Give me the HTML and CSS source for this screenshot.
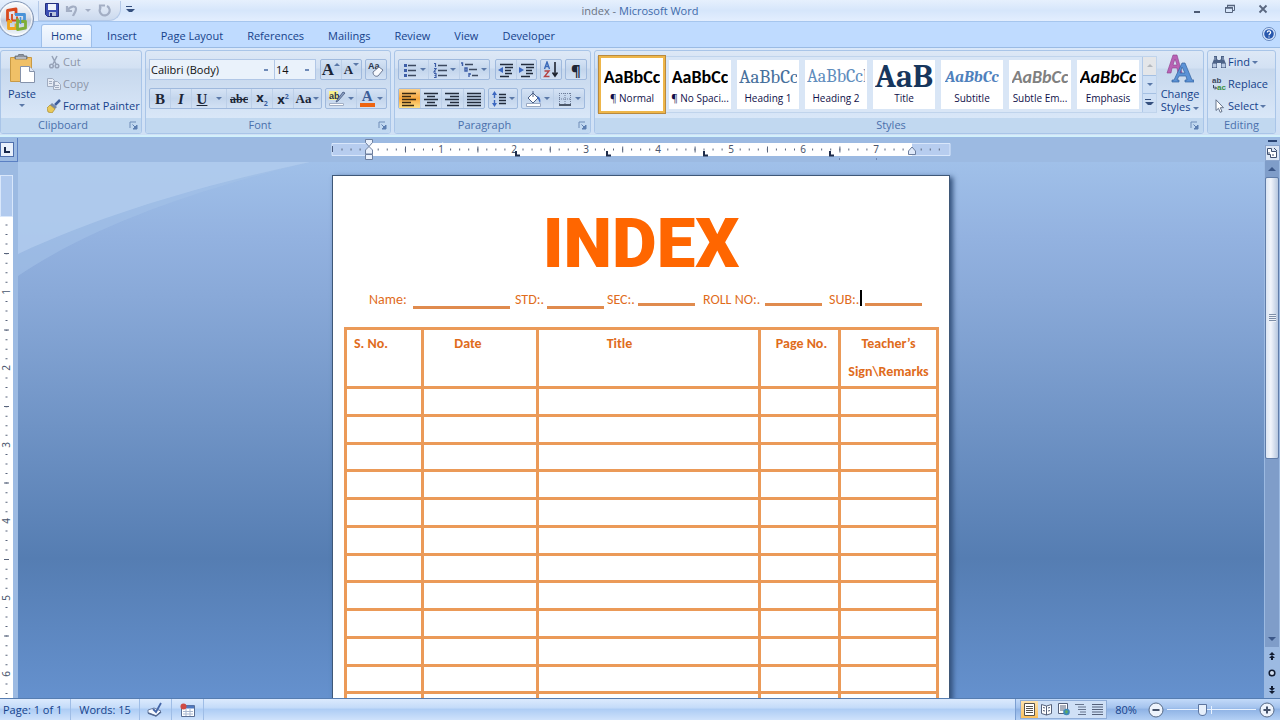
FILE: index.html
```html
<!DOCTYPE html>
<html lang="en">
<head>
    <meta charset="UTF-8">
    <meta name="viewport" content="width=device-width, initial-scale=1.0">
    <title>index - Microsoft Word</title>
    <link rel="stylesheet" href="styles.css">
</head>
<body>
    <svg class="sprite" aria-hidden="true">
        <symbol id="launcher" viewBox="0 0 9 9">
            <path d="M1 7V1h6" fill="none" stroke="#6f8db8"/>
            <path d="M3.5 3.5l3 3M8 4v4H4z" fill="#5d7fb1" stroke="#5d7fb1"/>
        </symbol>
        <symbol id="lines" viewBox="0 0 16 16">
            <path d="M1 2.5h14M1 5.5h14M1 8.5h14M1 11.5h14M1 14.5h14" stroke="#222c3c" stroke-width="1.4"/>
        </symbol>
    </svg>

    <header class="titlebar">
        <button class="orb" aria-label="Office Button">
            <svg width="36" height="38" viewBox="0 0 36 38">
                <defs>
                    <linearGradient id="orbFill" x2="0" y2="1">
                        <stop offset="0" stop-color="#fdfdfe"/>
                        <stop offset=".45" stop-color="#d7dde8"/>
                        <stop offset=".55" stop-color="#bcc8da"/>
                        <stop offset="1" stop-color="#f6fbff"/>
                    </linearGradient>
                </defs>
                <circle cx="16" cy="19" r="17.5" fill="url(#orbFill)" stroke="#7f93b3"/>
                <circle cx="16" cy="19" r="16" fill="none" stroke="#fff" opacity=".8"/>
                <g fill="none" stroke-width="2.8" stroke-linejoin="round">
                    <path d="M10 20.500H7.500V10.500l8.500-1.500v6" stroke="#d8481c"/>
                    <path d="M15 14.500h9.500v6.500h-2" stroke="#4a93d8"/>
                    <path d="M12 14v6.500h5v-4" stroke="#d8481c" stroke-width="1.800"/>
                    <path d="M12 21.500H8.500v7H16v-5" stroke="#efa51e"/>
                    <path d="M17.500 18.500v11l8-1.500v-6.500h-7" stroke="#7fae36"/>
                    <path d="M20.500 17v7" stroke="#4a93d8" stroke-width="1.500"/>
                </g>
            </svg>
        </button>
        <div class="quick">
            <button aria-label="Save">
                <svg width="14" height="14" viewBox="0 0 14 14"><path d="M.5.5h13v13H2.500l-2-2z" fill="#3c4fb4" stroke="#232f7d"/><path d="M3 1h8v6H3z" fill="#eef3fb"/><path d="M4 9h7v4H4z" fill="#b9c4dc"/><path d="M5 10h2v3H5z" fill="#232f7d"/></svg>
            </button>
            <button aria-label="Undo">
                <svg width="14" height="14" viewBox="0 0 14 14"><path d="M2 3v5h5M2.500 7.500C5 3 11 2 11 6c0 3-2 4-3 7" fill="none" stroke="#a3aec4" stroke-width="2.200"/></svg>
            </button>
            <span class="caret faded"></span>
            <button aria-label="Repeat">
                <svg width="14" height="14" viewBox="0 0 14 14"><path d="M10 3a5 5 0 1 1-6 1M3 7V2.500h5" fill="none" stroke="#a3aec4" stroke-width="2.200"/></svg>
            </button>
        </div>
        <button aria-label="Customize Quick Access Toolbar"><span class="caret barred"></span></button>
        <h1 class="caption">index - <span>Microsoft Word</span></h1>
        <div class="window-buttons">
            <button aria-label="Minimize"><svg width="12" height="12" viewBox="0 0 12 12"><path d="M3 9h6" stroke="#4c5a73" stroke-width="2"/></svg></button>
            <button aria-label="Restore"><svg width="12" height="12" viewBox="0 0 12 12"><path d="M3.500 4V2.500h7v5H9M1.500 4.500h7v5h-7z" fill="none" stroke="#56647d"/><path d="M1 5h8M3 2.500h8" stroke="#56647d" stroke-width="1.500"/></svg></button>
            <button aria-label="Close"><svg width="12" height="12" viewBox="0 0 12 12"><path d="M2.500 2.500l7 7M9.500 2.500l-7 7" stroke="#5a677f" stroke-width="1.800"/></svg></button>
        </div>
    </header>

    <nav class="tabs">
        <a class="active" href="#home">Home</a>
        <a href="#insert">Insert</a>
        <a href="#layout">Page Layout</a>
        <a href="#references">References</a>
        <a href="#mailings">Mailings</a>
        <a href="#review">Review</a>
        <a href="#view">View</a>
        <a href="#developer">Developer</a>
        <button class="help" aria-label="Help">
            <svg width="14" height="14" viewBox="0 0 14 14"><circle cx="7" cy="7" r="6.500" fill="#dceaff" stroke="#6587bd"/><circle cx="7" cy="7" r="4.800" fill="#2858ae"/><path d="M5.300 5.600c0-2.400 3.600-2.200 3.300 0C8.500 6.700 7 6.800 7 8.300M7 9.400v1.200" fill="none" stroke="#fff" stroke-width="1.200"/></svg>
        </button>
    </nav>

    <section class="ribbon">
        <div class="group clipboard">
            <div class="group-body">
                <button class="big">
                    <svg width="28" height="30" viewBox="0 0 28 30">
                        <path d="M2.500 3.500h21v24h-21z" fill="#f0c067" stroke="#c99a45"/>
                        <path d="M7 5V2h3l1-2h4l1 2h3v3z" fill="#8b929d" stroke="#5d646f" stroke-width=".7"/>
                        <path d="M8 4h10" stroke="#e4e7ec"/>
                        <path d="M12.500 12.500h9l5 5v11h-14z" fill="#fff" stroke="#8592aa"/>
                        <path d="M21.500 12.500v5h5" fill="#dfe6f2" stroke="#8592aa"/>
                    </svg>
                    Paste
                    <span class="caret"></span>
                </button>
                <div class="stack">
                    <button class="small" disabled>
                        <svg width="14" height="14" viewBox="0 0 14 14"><path d="M5 1l4 8M10 1L6 9" stroke="#97a3b8" stroke-width="1.500"/><circle cx="4.500" cy="11" r="1.800" fill="none" stroke="#97a3b8" stroke-width="1.500"/><circle cx="10" cy="11" r="1.800" fill="none" stroke="#97a3b8" stroke-width="1.500"/></svg>
                        Cut
                    </button>
                    <button class="small" disabled>
                        <svg width="14" height="14" viewBox="0 0 14 14"><path d="M.5 1.500h5l2 2v6h-7zM6.500 4.500h4l3 3v5h-7z" fill="#e6ebf4" stroke="#a1acc0"/><path d="M8 8.500h4M8 10.500h4M2 4.500h3M2 6.500h3" stroke="#a1acc0"/></svg>
                        Copy
                    </button>
                    <button class="small">
                        <svg width="14" height="14" viewBox="0 0 14 14"><path d="M13 1L8 6" stroke="#3e5f9d" stroke-width="2.500"/><path d="M5 4l5 4-2 2-5-4z" fill="#7689a8"/><path d="M3 6l5 4-3 4-4-1-1-4z" fill="#e9c95a" stroke="#a8892f" stroke-width=".7"/></svg>
                        Format Painter
                    </button>
                </div>
            </div>
            <div class="group-label">Clipboard<button aria-label="Clipboard options"><svg width="9" height="9"><use href="#launcher"/></svg></button></div>
        </div>

        <div class="group font">
            <div class="group-body rows">
                <div class="row">
                    <div class="combos">
                        <select class="family" aria-label="Font"><option>Calibri (Body)</option></select>
                        <select class="size" aria-label="Font Size"><option>14</option></select>
                    </div>
                    <div class="set">
                        <button class="serif grow" aria-label="Grow Font">A<i class="tri up"></i></button>
                        <button class="serif shrink" aria-label="Shrink Font">A<i class="tri"></i></button>
                    </div>
                    <div class="set">
                        <button aria-label="Clear Formatting"><svg width="18" height="17" viewBox="0 0 18 17"><text x="1" y="8" class="icon-text">Aa</text><path d="M6 11l6-5 4 3-5 6c-3 1-5-1-5-4z" fill="#f7f9fd" stroke="#6c7a94"/></svg></button>
                    </div>
                </div>
                <div class="row">
                    <div class="set wide">
                        <button class="serif" aria-label="Bold"><b>B</b></button>
                        <button class="serif" aria-label="Italic"><i>I</i></button>
                        <button class="serif" aria-label="Underline"><u>U</u></button>
                        <button class="drop" aria-label="Underline styles"><span class="caret"></span></button>
                        <button class="serif abc" aria-label="Strikethrough"><s>abc</s></button>
                        <button class="script" aria-label="Subscript"><span>x<sub>2</sub></span></button>
                        <button class="script" aria-label="Superscript"><span>x<sup>2</sup></span></button>
                        <button class="serif case" aria-label="Change Case">Aa<span class="caret"></span></button>
                    </div>
                    <div class="set pair">
                        <button aria-label="Highlight"><svg width="18" height="17" viewBox="0 0 18 17"><path d="M1 1h9v9H1z" fill="#f7f18d"/><text x="1" y="9" class="icon-text">ab</text><path d="M15 2l-6 8-1 2 2-1 7-8z" fill="#8ba0c4" stroke="#42557b" stroke-width=".8"/><path d="M1.500 13.500h14v2h-14z" fill="#fff" stroke="#a3b0c6"/></svg><span class="caret"></span></button>
                        <button class="font-color" aria-label="Font Color"><b>A</b><span class="caret"></span></button>
                    </div>
                </div>
            </div>
            <div class="group-label">Font<button aria-label="Font options"><svg width="9" height="9"><use href="#launcher"/></svg></button></div>
        </div>

        <div class="group paragraph">
            <div class="group-body rows">
                <div class="row">
                    <div class="set triple">
                        <button aria-label="Bullets"><svg width="16" height="16" viewBox="0 0 16 16"><path d="M6 3.500h8M6 8.500h8M6 13.500h8" stroke="#3d4a60" stroke-width="1.400"/><path d="M2 2h3v3H2zM2 7h3v3H2zM2 12h3v3H2z" fill="#3f5fa8"/></svg><span class="caret"></span></button>
                        <button aria-label="Numbering"><svg width="16" height="16" viewBox="0 0 16 16"><path d="M6 3.500h9M6 8.500h9M6 13.500h9" stroke="#3d4a60" stroke-width="1.400"/><path d="M2 1.500h1.500V5M2 6.500h2L2 10h2M2 11.500h2v4H2M2.500 13.500H4" fill="none" stroke="#3f5fa8" stroke-width="1.200"/></svg><span class="caret"></span></button>
                        <button aria-label="Multilevel List"><svg width="18" height="16" viewBox="0 0 18 16"><path d="M4 2.500h8M8 7.500h8M11 13.500h6" stroke="#3d4a60" stroke-width="1.400"/><path d="M0 1h1.500v3M4 6h2v3H4zM8 11v4M8 12h2" fill="none" stroke="#3f5fa8" stroke-width="1.400"/></svg><span class="caret"></span></button>
                    </div>
                    <div class="set">
                        <button aria-label="Decrease Indent"><svg width="16" height="16" viewBox="0 0 16 16"><path d="M2 2.500h13M7 5.500h8M7 8.500h6M7 11.500h7M2 14.500h9" stroke="#222c3c" stroke-width="1.500"/><path d="M5 5v6L0 8z" fill="#3c68c0"/></svg></button>
                        <button aria-label="Increase Indent"><svg width="16" height="16" viewBox="0 0 16 16"><path d="M2 2.500h13M7 5.500h8M7 8.500h6M7 11.500h7M2 14.500h9" stroke="#222c3c" stroke-width="1.500"/><path d="M0 5v6l5-3z" fill="#3c68c0"/></svg></button>
                    </div>
                    <div class="set">
                        <button aria-label="Sort"><svg width="16" height="17" viewBox="0 0 16 17"><path d="M1.500 8L4 1l2.500 7M2.500 5.500h3" fill="none" stroke="#3a69b8" stroke-width="1.400"/><path d="M1.500 10H6l-4.500 5.500H6.500" fill="none" stroke="#b54343" stroke-width="1.400"/><path d="M12 1v13M9.500 11.500L12 15l2.500-3.500" fill="none" stroke="#1e2430" stroke-width="1.600"/></svg></button>
                    </div>
                    <div class="set">
                        <button class="pilcrow" aria-label="Show formatting marks">¶</button>
                    </div>
                </div>
                <div class="row">
                    <div class="set quad">
                        <button class="pressed" aria-label="Align Left"><svg width="16" height="16" viewBox="0 0 16 16"><path d="M1 2.500h14M1 5.500h9M1 8.500h14M1 11.500h9M1 14.500h12" stroke="#3a2a12" stroke-width="1.500"/></svg></button>
                        <button aria-label="Center"><svg width="16" height="16" viewBox="0 0 16 16"><path d="M1 2.500h14M4 5.500h8M1 8.500h14M4 11.500h8M2 14.500h12" stroke="#222c3c" stroke-width="1.500"/></svg></button>
                        <button aria-label="Align Right"><svg width="16" height="16" viewBox="0 0 16 16"><path d="M1 2.500h14M6 5.500h9M1 8.500h14M6 11.500h9M3 14.500h12" stroke="#222c3c" stroke-width="1.500"/></svg></button>
                        <button aria-label="Justify"><svg width="16" height="16"><use href="#lines"/></svg></button>
                    </div>
                    <div class="set spacing">
                        <button aria-label="Line Spacing"><svg width="16" height="16" viewBox="0 0 16 16"><path d="M3.500 2v12" stroke="#3c68c0" stroke-width="1.400" stroke-dasharray="5 2"/><path d="M3.500 0L6 4H1zM3.500 16L6 12H1z" fill="#3c68c0"/><path d="M8 3.500h7M8 6.500h7M8 9.500h7M8 12.500h7" stroke="#222c3c" stroke-width="1.500"/></svg><span class="caret"></span></button>
                    </div>
                    <div class="set pair">
                        <button aria-label="Shading"><svg width="17" height="16" viewBox="0 0 17 16"><path d="M3 7l5-5 5 5-5 5z" fill="#fff" stroke="#4b5f85"/><path d="M8 6V0" stroke="#4b5f85"/><path d="M12 5c3 1 4 4 3 7l-2-4z" fill="#3c68c0"/><path d="M1.500 12.500h14v3h-14z" fill="#fff" stroke="#9aa9c2"/></svg><span class="caret"></span></button>
                        <button aria-label="Borders"><svg width="16" height="16" viewBox="0 0 16 16"><path d="M2.500 2v12M13.500 2v12M2 2.500h12M8 2v12M2 8h12" stroke="#6d7d99" stroke-dasharray="1 1"/><path d="M2 14h12" stroke="#222c3c" stroke-width="1.600"/></svg><span class="caret"></span></button>
                    </div>
                </div>
            </div>
            <div class="group-label">Paragraph<button aria-label="Paragraph options"><svg width="9" height="9"><use href="#launcher"/></svg></button></div>
        </div>

        <div class="group styles">
            <div class="group-body">
                <div class="gallery">
                    <button class="style selected"><span class="sample normal">AaBbCc</span>¶ Normal</button>
                    <button class="style"><span class="sample normal">AaBbCc</span>¶ No Spaci...</button>
                    <button class="style"><span class="sample heading1">AaBbCc</span>Heading 1</button>
                    <button class="style"><span class="sample heading2">AaBbCcl</span>Heading 2</button>
                    <button class="style"><span class="sample title">AaB</span>Title</button>
                    <button class="style"><span class="sample subtitle">AaBbCc</span>Subtitle</button>
                    <button class="style"><span class="sample subtle">AaBbCc</span>Subtle Em...</button>
                    <button class="style"><span class="sample emphasis">AaBbCc</span>Emphasis</button>
                    <div class="gallery-scroll">
                        <button disabled aria-label="Previous row"><span class="caret up"></span></button>
                        <button aria-label="Next row"><span class="caret"></span></button>
                        <button aria-label="More"><span class="caret barred"></span></button>
                    </div>
                </div>
                <button class="big change">
                    <svg width="28" height="30" viewBox="0 0 28 30">
                        <path d="M1 19L7 1h4l5 18h-4l-1-5H6l-1 5zM7 11h4L9 5z" fill="#b862b4" stroke="#8c3f8c" stroke-width=".6"/>
                        <path d="M6 28v-2h2l8-17h3l7 17h2v2h-9v-2h2l-1-4h-7l-2 4h2v2zM14 19h5l-3-6z" fill="#5b92d6" stroke="#33639f" stroke-width=".7"/>
                    </svg>
                    <span>Change<br>Styles <span class="caret"></span></span>
                </button>
            </div>
            <div class="group-label">Styles<button aria-label="Styles options"><svg width="9" height="9"><use href="#launcher"/></svg></button></div>
        </div>

        <div class="group editing">
            <div class="group-body">
                <div class="stack">
                    <button class="small">
                        <svg width="14" height="14" viewBox="0 0 14 14"><path d="M2 1h3v3l1 1h2l1-1V1h3v3l2 5v4H9V8H5v5H0V9l2-5z" fill="#4c6287"/><path d="M1 9h3v3H1zM10 9h3v3h-3zM3 2v3M11 2v3" fill="#b9c9e2" stroke="#b9c9e2" stroke-width=".7"/></svg>
                        Find <span class="caret"></span>
                    </button>
                    <button class="small">
                        <svg width="14" height="14" viewBox="0 0 14 14"><text x="0" y="6" class="tiny-text">ab</text><text x="5" y="13" class="tiny-text green">ac</text><path d="M1.500 8v3h3M3 9.500L4.500 11 3 12.500" fill="none" stroke="#3d4a60"/></svg>
                        Replace
                    </button>
                    <button class="small">
                        <svg width="14" height="14" viewBox="0 0 14 14"><path d="M4 .8v10.700l2.500-2.200 1.700 4 1.800-.8-1.700-3.800h3.200z" fill="#fff" stroke="#58667f" stroke-width=".9"/></svg>
                        Select <span class="caret"></span>
                    </button>
                </div>
            </div>
            <div class="group-label">Editing</div>
        </div>
    </section>

    <main class="workspace">
        <div class="corner"><button aria-label="Left Tab"><svg width="8" height="8" viewBox="0 0 8 8"><path d="M2 1v5h5" fill="none" stroke="#16264a" stroke-width="2"/></svg></button></div>
        <div class="ruler-row">
            <svg class="ruler" viewBox="0 0 618 20" height="20">
                <path d="M0 4.500h618v12H0z" fill="#b7cdef" stroke="#d9e7fb"/>
                <path d="M37 4h543v13H37z" fill="#fff"/>
                <path d="M.5 7v6" stroke="#4a5b7d"/>
                <path d="M9.500 10.500H612" stroke="#59657c" stroke-width="2" stroke-dasharray="1 8.050"/>
                <path d="M73 10.500H560" stroke="#59657c" stroke-width="6" stroke-dasharray="1 71.400"/>
                <g class="ruler-text">
                    <text x="109" y="14">1</text><text x="182" y="14">2</text><text x="254" y="14">3</text><text x="326" y="14">4</text><text x="399" y="14">5</text><text x="471" y="14">6</text><text x="544" y="14">7</text>
                </g>
                <path d="M184 12v4.500h4M275 12v4.500h4M372 12v4.500h4M498 12v4.500h4" fill="none" stroke="#1e2c4a" stroke-width="2"/>
                <path d="M33.500.5h7v3L37 7.500l-3.500-4zM33.500 15v-4L37 7.500l3.500 3.500v4zM33.500 15.500h7v5h-7z" fill="#eaf1fc" stroke="#6d7f9f"/>
                <path d="M576.500 15.500v-3.500l3.500-4 3.500 4v3.500z" fill="#dfe9f9" stroke="#6d7f9f"/>
                <path d="M507.500 19v2M544.500 19v2" stroke="#6d86b2"/>
            </svg>
        </div>
        <div class="vruler-col">
            <svg class="vruler" width="13" height="523" viewBox="0 0 13 523">
                <path d="M0 0h13v523H0z" fill="#fff"/>
                <path d="M.5.5h12v41H.5z" fill="#b1caee" stroke="#d9e7fb"/>
                <path d="M6.500 49.500V523" stroke="#59657c" stroke-width="2" stroke-dasharray="1 8.560"/>
                <path d="M6.500 78V523" stroke="#59657c" stroke-width="5" stroke-dasharray="1 75.500"/>
                <g class="ruler-text">
                    <text transform="translate(10 117) rotate(-90)">1</text><text transform="translate(10 193) rotate(-90)">2</text><text transform="translate(10 270) rotate(-90)">3</text><text transform="translate(10 346) rotate(-90)">4</text><text transform="translate(10 423) rotate(-90)">5</text><text transform="translate(10 499) rotate(-90)">6</text>
                </g>
            </svg>
        </div>
        <div class="canvas">
            <svg class="swoosh" width="300" height="115" viewBox="0 0 300 115" aria-hidden="true">
                <path d="M0 0h292C190 25 80 60 0 114z" fill="#a3c1e8" opacity=".6"/>
                <path d="M0 0h292C190 22 90 50 0 92z" fill="#b1ccee" opacity=".8"/>
            </svg>
            <article class="page">
                <h2>INDEX</h2>
                <div class="fields">
                    <span>Name:</span><span class="blank low"></span>
                    <span>STD:.</span><span class="blank low"></span>
                    <span>SEC:.</span><span class="blank"></span>
                    <span>ROLL NO:.</span><span class="blank"></span>
                    <span class="cursor">SUB:.</span><span class="blank"></span>
                </div>
                <table>
                    <colgroup><col class="c-no"><col class="c-date"><col class="c-title"><col class="c-page"><col class="c-sign"></colgroup>
                    <thead>
                        <tr><th class="first">S. No.</th><th class="date">Date</th><th class="heading">Title</th><th>Page No.</th><th>Teacher’s Sign\Remarks</th></tr>
                    </thead>
                    <tbody>
                        <tr><td></td><td></td><td></td><td></td><td></td></tr>
                        <tr><td></td><td></td><td></td><td></td><td></td></tr>
                        <tr><td></td><td></td><td></td><td></td><td></td></tr>
                        <tr><td></td><td></td><td></td><td></td><td></td></tr>
                        <tr><td></td><td></td><td></td><td></td><td></td></tr>
                        <tr><td></td><td></td><td></td><td></td><td></td></tr>
                        <tr><td></td><td></td><td></td><td></td><td></td></tr>
                        <tr><td></td><td></td><td></td><td></td><td></td></tr>
                        <tr><td></td><td></td><td></td><td></td><td></td></tr>
                        <tr><td></td><td></td><td></td><td></td><td></td></tr>
                        <tr><td></td><td></td><td></td><td></td><td></td></tr>
                        <tr><td></td><td></td><td></td><td></td><td></td></tr>
                    </tbody>
                </table>
            </article>
        </div>
        <div class="scrollbar">
            <span class="split"></span>
            <button class="ruler-toggle" aria-label="View Ruler"><svg width="12" height="12" viewBox="0 0 12 12"><path d="M1.500 1.500h4v3h5v6h-6v-3h-3z" fill="#fff" stroke="#3f5070"/><path d="M8 1l3 3M3 5v2M6 8h2" stroke="#3f5070"/></svg></button>
            <div class="track">
                <button aria-label="Scroll up"><i class="tri up"></i></button>
                <div class="thumb"><i></i></div>
                <button aria-label="Scroll down"><i class="tri"></i></button>
            </div>
            <div class="browse">
                <button aria-label="Previous Page"><svg width="8" height="8" viewBox="0 0 8 8"><path d="M4 0l3 3H1zM4 3l3 3H1zM3 6h2v2H3z" fill="#111b30"/></svg></button>
                <button aria-label="Select Browse Object"><svg width="8" height="8" viewBox="0 0 8 8"><circle cx="4" cy="4" r="2.800" fill="#d3dff0" stroke="#111b30" stroke-width="1.500"/></svg></button>
                <button aria-label="Next Page"><svg width="8" height="8" viewBox="0 0 8 8"><path d="M4 8L1 5h6zM4 5L1 2h6zM3 0h2v2H3z" fill="#111b30"/></svg></button>
            </div>
        </div>
    </main>

    <footer class="statusbar">
        <button class="pages">Page: 1 of 1</button>
        <button class="words">Words: 15</button>
        <button class="icon" aria-label="Proofing"><svg width="18" height="16" viewBox="0 0 18 16"><path d="M2 8l6-2 7 3-5 5-8-3z" fill="#f7faff" stroke="#6a7ea3"/><path d="M2 11l8 3 5-4" fill="none" stroke="#53688f" stroke-width="1.500"/><path d="M7 7l3 3 5-9" fill="none" stroke="#4466a8" stroke-width="1.800"/></svg></button>
        <button class="icon" aria-label="Record Macro"><svg width="15" height="14" viewBox="0 0 15 14"><path d="M1.500 2.500h13v11h-13z" fill="#fff" stroke="#5a6d92"/><path d="M2 4h12" stroke="#4f78c0" stroke-width="3"/><path d="M3 8.500h10M3 11h10M6 6v7M10 6v7" stroke="#a9b7d0"/><circle cx="3.500" cy="3.500" r="3" fill="#cf4a43"/></svg></button>
        <div class="right">
            <div class="views">
                <button class="pressed" aria-label="Print Layout"><svg width="13" height="13" viewBox="0 0 13 13"><path d="M1.500.5h10v12h-10z" fill="#fff" stroke="#55524c"/><path d="M3 3.500h7M3 5.500h7M3 7.500h7M3 9.500h7" stroke="#55524c"/></svg></button>
                <button aria-label="Full Screen Reading"><svg width="13" height="13" viewBox="0 0 13 13"><path d="M1.500 1.500l5 1.500 5-1.500v9l-5 1.500-5-1.500zM6.500 3v9" fill="#fff" stroke="#55617a"/><path d="M3 4.500l2 .5M3 7.500l2 .5M8 5l2-.5M8 8l2-.5" stroke="#55617a"/></svg></button>
                <button aria-label="Web Layout"><svg width="13" height="13" viewBox="0 0 13 13"><path d="M1.500.5h9v10h-9z" fill="#fff" stroke="#55617a"/><path d="M3 3h6M3 5h6M3 7h4" stroke="#55617a"/><circle cx="9.500" cy="9" r="3.300" fill="#3d88b8"/><path d="M8 8l2-1 1 2-2 2z" fill="#61ad5c"/></svg></button>
                <button aria-label="Outline"><svg width="13" height="13" viewBox="0 0 13 13"><path d="M1 1.500h9M4 4h8M4 6.500h8M6 9h6M4 11.500h8" stroke="#66748d"/></svg></button>
                <button aria-label="Draft"><svg width="13" height="13" viewBox="0 0 13 13"><path d="M1 1.500h11M1 4h11M1 6.500h11M1 9h11M1 11.500h11" stroke="#55617a" stroke-width="1.200"/></svg></button>
            </div>
            <button class="percent">80%</button>
            <button class="round" aria-label="Zoom Out"><svg width="16" height="16" viewBox="0 0 16 16"><circle cx="8" cy="8" r="7" fill="#edf3fc" stroke="#556885"/><path d="M4.500 8h7" stroke="#46536b" stroke-width="2"/></svg></button>
            <input type="range" min="0" max="100" value="39" aria-label="Zoom">
            <button class="round" aria-label="Zoom In"><svg width="16" height="16" viewBox="0 0 16 16"><circle cx="8" cy="8" r="7" fill="#edf3fc" stroke="#556885"/><path d="M4.500 8h7M8 4.500v7" stroke="#46536b" stroke-width="2"/></svg></button>
        </div>
    </footer>
</body>
</html>
```
FILE: styles.css
```css
* {
    margin: 0;
    padding: 0;
    box-sizing: border-box;
}

body {
    font-family: 'Open Sans', 'Noto Sans', sans-serif;
    font-size: 11px;
    line-height: 14px;
    color: #15428b;
    height: 100vh;
    display: flex;
    flex-direction: column;
    overflow: hidden;
    background: #bfdbff;
}

button, select, input {
    font: inherit;
    color: inherit;
    background: none;
    border: none;
}

button {
    display: flex;
    align-items: center;
    justify-content: center;
    white-space: nowrap;
}

svg {
    display: block;
    flex: none;
}

.sprite {
    width: 0;
    height: 0;
    position: absolute;
}

.caret, .tri {
    display: inline-block;
    flex: none;
    border: 3px solid transparent;
    border-top-color: #5a78a8;
    border-bottom: 0;
    vertical-align: middle;
}

.caret.up, .tri.up {
    border-top: 0;
    border-bottom: 3px solid #5a78a8;
}

.caret.faded {
    border-top-color: #a3aec4;
}

.caret.barred {
    border-top-color: #35507f;
}

.caret.barred::before {
    content: '';
    display: block;
    width: 6px;
    height: 1px;
    margin: -6px 0 0 -3px;
    background: #35507f;
}

/* title bar */
.titlebar {
    flex: none;
    position: relative;
    height: 22px;
    display: grid;
    grid-template-columns: 83px 18px 1fr 103px;
    align-items: center;
    padding-left: 38px;
    background: linear-gradient(#e6f0fd, #d6e6fb 50%, #e3eefe);
    border-bottom: 1px solid #a6c6ee;
}

.orb {
    position: absolute;
    left: 0;
    top: 0;
    z-index: 1;
}

.quick {
    height: 20px;
    display: flex;
    align-items: center;
    gap: 6px;
    padding-left: 6px;
    background: linear-gradient(#e7eef9, #ccdaee);
    border: 1px solid #b4c9e8;
    border-top: 0;
    border-radius: 0 0 12px 0;
}

.caption {
    font-size: 11px;
    font-weight: normal;
    text-align: center;
    padding-right: 36px;
    color: #6b7381;
}

.caption span {
    color: #3e6aaa;
}

.window-buttons {
    display: flex;
    gap: 21px;
    padding: 0 0 4px 14px;
}

/* tabs */
.tabs {
    flex: none;
    height: 25px;
    display: flex;
    align-items: flex-end;
    padding: 0 4px 0 41px;
    gap: 6px;
    background: #bfdbff;
}

.tabs a {
    color: inherit;
    text-decoration: none;
    padding: 4px 9px;
}

.tabs a.active {
    background: linear-gradient(#f4f9ff, #dfebfb);
    border: 1px solid #9ebfea;
    border-bottom: 0;
    border-radius: 3px 3px 0 0;
}

.help {
    margin: 0 0 6px auto;
}

/* ribbon */
.ribbon {
    flex: none;
    height: 91px;
    display: flex;
    gap: 3px;
    padding: 2px 4px 3px 0;
    background: linear-gradient(#dbe8f9, #cfe0f5);
    border: solid #9abbe4;
    border-width: 1px 0;
    box-shadow: inset 0 -2px #d3f0fb;
}

.group {
    display: flex;
    flex-direction: column;
    background: linear-gradient(#dde8f6, #d3e1f3 17px, #c7d8ed 18px, #d9e7f8 68px);
    border: 1px solid #a9c5e8;
    border-radius: 3px;
    overflow: hidden;
}

.group-body {
    flex: 1;
    display: flex;
}

.group-label {
    height: 15px;
    display: flex;
    justify-content: center;
    background: #c1d8f0;
    color: #4a70ac;
}

.group-label button {
    width: 16px;
    margin-left: auto;
}

/* balances the launcher's auto margin */
.group-label:has(button)::before {
    content: '';
    margin-right: auto;
}

.clipboard { width: 142px; }
.font { width: 246px; }
.paragraph { width: 197px; }
.styles { flex: 1; }
.editing { width: 69px; }

.big {
    flex-direction: column;
    justify-content: flex-start;
    width: 42px;
    padding-top: 3px;
    gap: 3px;
}

.big.change {
    width: 46px;
    line-height: 13px;
    margin: 0 auto;
}

.stack {
    display: flex;
    flex-direction: column;
    align-items: flex-start;
}

.small {
    height: 22px;
    gap: 2px;
    padding-left: 4px;
}

.small:disabled {
    color: #8d96a8;
}

.rows {
    flex-direction: column;
    padding: 8px 3px 0;
    gap: 8px;
}

.row {
    display: flex;
    gap: 3px;
    height: 21px;
}

.combos {
    display: flex;
    width: 168px;
    margin-right: 1px;
    border: 1px solid #b1c7e6;
}

.combos select {
    appearance: none;
    color: #111;
    padding-left: 1px;
    background: #eaf2fb linear-gradient(#6f8bb8, #6f8bb8) right 6px center / 4px 2px no-repeat;
}

.combos .family {
    flex: 1;
}

.combos .size {
    width: 41px;
    border-left: 1px solid #b1c7e6;
}

.set {
    display: flex;
    border: 1px solid #9fb9dd;
    border-radius: 2px;
    background: linear-gradient(#d5e3f5, #c3d5ec 50%, #d2e1f4);
    color: #1c2536;
}

.set button {
    flex: 1;
    min-width: 20px;
    gap: 2px;
}

.set button + button {
    border-left: 1px solid #bccfe8;
}

.set.wide { width: 173px; }
.set.triple { width: 92px; margin-right: 2px; }
.set.quad { width: 87px; }
.set.spacing { width: 30px; }
.paragraph .set.pair { width: 64px; }
.font .set.pair { flex: 1; }

.set .pressed {
    background: linear-gradient(#fbd08a, #f9a83f 50%, #fde088);
}

.set .drop {
    flex: none;
    min-width: 14px;
    border-left: 0;
}

.serif {
    font-family: 'Liberation Serif', serif;
    font-weight: bold;
    font-size: 15px;
}

.serif.abc, .serif.case {
    font-size: 12px;
}

.serif.abc { min-width: 25px; }

.serif.case {
    min-width: 28px;
    font-size: 13px;
}

.serif.grow, .serif.shrink {
    align-items: flex-start;
    gap: 0;
    padding-top: 3px;
}

.serif.grow { font-size: 17px; }
.serif.shrink { font-size: 13px; }

.script {
    font-weight: bold;
    font-size: 13px;
}

.script sub, .script sup {
    font-size: 7px;
    line-height: 7px;
    color: #3a5fa0;
}

.icon-text {
    font: bold 9px 'Liberation Sans', sans-serif;
    fill: #28334a;
}

.tiny-text {
    font: bold 8px 'Liberation Sans', sans-serif;
    fill: #3d4a60;
}

.tiny-text.green {
    fill: #3a8f3d;
}

.font-color b {
    font-family: 'Liberation Serif', serif;
    font-size: 15px;
    line-height: 13px;
    padding: 0 2px;
    color: #3c5d98;
    border-bottom: 4px solid #ee6411;
}

.pilcrow {
    font-size: 15px;
    font-weight: bold;
}

/* style gallery */
.gallery {
    display: flex;
    height: 57px;
    margin: 5px 0 0 2px;
    background: #d9e6f6;
    border: 1px solid #c0d4ec;
}

.style {
    flex-direction: column;
    width: 62px;
    margin: 3px;
    background: #fff;
    color: #10104a;
    font-size: 10px;
    overflow: hidden;
}

.style.selected {
    width: 68px;
    margin: -2px 0;
    border: 3px solid #eeb64a;
    outline: 1px solid #b98a3f;
    outline-offset: -1px;
}

.sample {
    height: 27px;
    line-height: 26px;
    max-width: 58px;
    overflow: hidden;
    font-family: Calibri, Lato, sans-serif;
    font-size: 18px;
}

.normal { color: #000; font-weight: bold; }
.heading1, .heading2, .title, .subtitle { font-family: Cambria, 'Liberation Serif', serif; }
.heading1 { color: #47709c; font-size: 19px; }
.heading2 { color: #5f8dbd; }
.title { color: #17365d; font-size: 32px; font-weight: bold; }
.subtitle { color: #4f81bd; font-size: 16px; font-weight: bold; font-style: italic; }
.subtle { color: #808080; font-weight: bold; font-style: italic; }
.emphasis { color: #000; font-weight: bold; font-style: italic; }

.gallery-scroll {
    width: 14px;
    display: flex;
    flex-direction: column;
    border-left: 1px solid #b1c9e8;
}

.gallery-scroll button {
    flex: 1;
    background: #cfe0f5;
}

.gallery-scroll button + button {
    border-top: 1px solid #a5c0e2;
}

.gallery-scroll button:disabled {
    background: #e4e6e9;
}

.gallery-scroll .up {
    border-bottom-color: #b4b8be;
}

/* document area */
.workspace {
    flex: 1;
    min-height: 0;
    display: grid;
    grid-template-columns: 18px 1fr 16px;
    grid-template-rows: 24px 1fr;
    background: #9cbae2;
}

.corner {
    border: 1px solid #5b80c3;
    border-width: 0 1px 1px 0;
    padding: 4px 3px 4px 0;
}

.corner button {
    width: 14px;
    height: 15px;
    border: 1px solid #4f70ae;
    background: #e8f0fc;
}

.ruler-row {
    display: flex;
    justify-content: center;
    padding-top: 1px;
}

.ruler {
    width: 618px;
    overflow: visible;
}

.ruler-text {
    font: 10px 'Noto Sans', sans-serif;
    text-anchor: middle;
    fill: #4a566d;
    stroke: #fff;
    stroke-width: 3px;
    paint-order: stroke;
}

.vruler-col {
    padding-top: 13px;
    min-height: 0;
    overflow: hidden;
}

.canvas {
    position: relative;
    overflow: hidden;
    display: flex;
    justify-content: center;
    padding-top: 13px;
    background: linear-gradient(#a0c0e9, #93b2e0 14%, #89a9d8 25%, #557db2 74%, #6591ce);
}

.swoosh {
    position: absolute;
    left: 0;
    top: 0;
}

/* page */
.page {
    position: relative;
    width: 618px;
    height: 800px;
    padding: 35px 11px 0;
    background: #fff;
    border: 1px solid #3f5878;
    box-shadow: 3px 2px 5px #33517c;
    font-family: Calibri, Lato, sans-serif;
    color: #df6c1c;
}

.page h2 {
    font: 900 69px/66px Roboto, sans-serif;
    text-align: center;
    color: #ff6600;
}

.fields {
    display: grid;
    grid-template-columns: 44px 102px 32px 60px 31px 65px 62px 64px 36px 57px;
    height: 20px;
    margin: 13px 0 0 25px;
    font-size: 14px;
    line-height: 20px;
    white-space: nowrap;
}

.blank {
    width: 57px;
    height: 16px;
    border-bottom: 3px solid #e08b4e;
}

.blank.low {
    height: 19px;
}

.blank:nth-child(2) {
    width: 97px;
}

.cursor {
    width: 33px;
    height: 16px;
    border-right: 2px solid #000;
}

table {
    width: 595px;
    height: 395px;
    margin-top: 17px;
    table-layout: fixed;
    border-collapse: collapse;
}

.c-no { width: 77px; }
.c-date { width: 115px; }
.c-title { width: 222px; }
.c-page { width: 80px; }
.c-sign { width: 98px; }

th, td {
    border: 3px solid #eb9a58;
}

th {
    height: 59px;
    font-size: 14px;
    line-height: 28px;
    vertical-align: top;
    overflow: hidden;
}

th.first {
    text-align: left;
    padding-left: 7px;
}

th.date {
    padding-right: 24px;
}

th.heading {
    padding-right: 58px;
}

th:nth-child(4) {
    padding-left: 4px;
}

/* scroll bar */
.scrollbar {
    grid-column: 3;
    grid-row: 1 / 3;
    display: flex;
    flex-direction: column;
    align-items: center;
    min-height: 0;
}

.split {
    width: 9px;
    height: 2px;
    margin: 2px 0 3px;
    background: #2b4676;
}

.ruler-toggle {
    width: 15px;
    height: 16px;
    background: #dce7f6;
    border: 1px solid #8ba5cd;
}

.track {
    flex: 1;
    width: 14px;
    display: flex;
    flex-direction: column;
    background: #7f9dc9;
}

.track button {
    height: 16px;
}

.track .tri {
    border-width: 4px;
    border-color: transparent;
    border-top-color: #3b5788;
    border-bottom: 0;
}

.track .tri.up {
    border-top: 0;
    border-bottom: 4px solid #3b5788;
}

.thumb {
    height: 58%;
    margin-bottom: auto;
    border: 1px solid #607da9;
    border-radius: 2px;
    background: linear-gradient(90deg, #dce5f2, #f1f5fb 40%, #b6c7df);
    display: flex;
    align-items: center;
    justify-content: center;
}

.thumb i {
    width: 7px;
    height: 8px;
    background: repeating-linear-gradient(#7e8fa8 0 1px, #eef2f8 1px 2px);
}

.browse {
    height: 51px;
    display: flex;
    flex-direction: column;
    justify-content: space-around;
}

/* status bar */
.statusbar {
    flex: none;
    height: 22px;
    display: flex;
    background: linear-gradient(#dceafd, #c5dcf9 40%, #aecdf5 50%, #cfe2fb);
    border-top: 1px solid #567db1;
}

.statusbar > button {
    border-right: 1px solid #9fbde6;
    padding: 0 8px;
}

.statusbar .pages {
    padding-left: 3px;
}

.statusbar .icon {
    width: 32px;
    padding: 0;
}

.right {
    margin-left: auto;
    width: 265px;
    display: flex;
    align-items: center;
    padding: 0 2px 0 4px;
    background: linear-gradient(#c3daf9, #a5c4ee 40%, #8fb3e5 50%, #b4d0f5);
    border-left: 1px solid #7b9fd2;
}

.views {
    display: flex;
    height: 19px;
    border: 1px solid #8fadd8;
    background: #cfe0f6;
}

.views button {
    width: 17px;
}

.views .pressed {
    background: linear-gradient(#fde2ad, #fbc05b);
}

.percent {
    width: 38px;
}

.round {
    margin: 0 3px;
}

input[type="range"] {
    appearance: none;
    flex: 1;
    min-width: 0;
    height: 16px;
    background: linear-gradient(#e8f2ff, #e8f2ff) center / 100% 1px no-repeat, linear-gradient(#e8f2ff, #e8f2ff) center / 1px 8px no-repeat;
}

input[type="range"]::-webkit-slider-thumb {
    appearance: none;
    width: 9px;
    height: 12px;
    border: 1px solid #5c759f;
    border-radius: 1px 1px 5px 5px;
    background: #e6effb;
}
```
